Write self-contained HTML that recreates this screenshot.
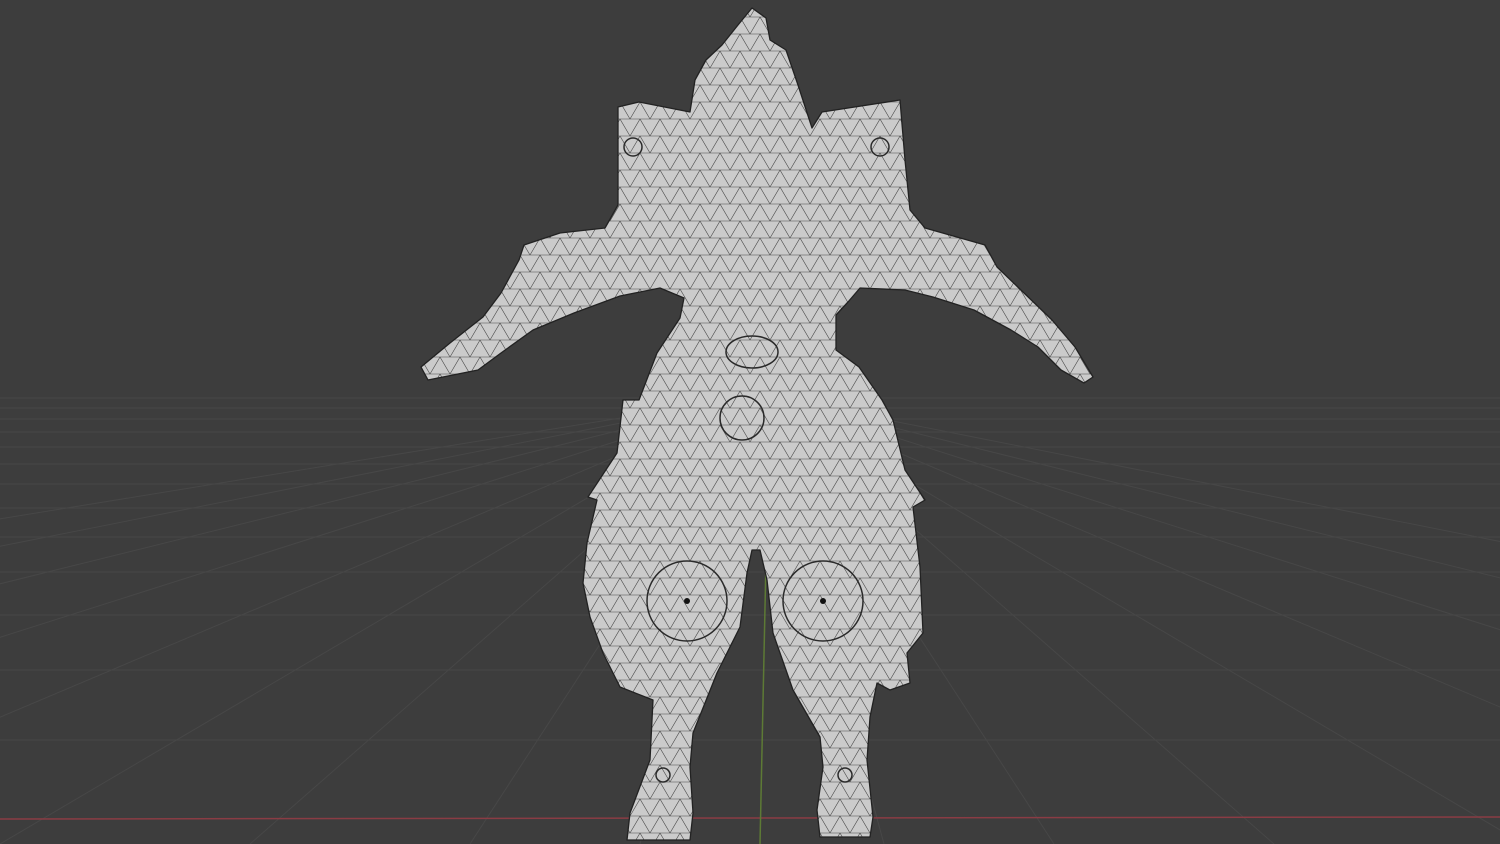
<!DOCTYPE html>
<html><head><meta charset="utf-8"><style>
html,body{margin:0;padding:0;background:#3d3d3d;width:1500px;height:844px;overflow:hidden}
svg{display:block}
</style></head><body>
<svg width="1500" height="844" viewBox="0 0 1500 844" xmlns="http://www.w3.org/2000/svg">
<defs>
<pattern id="tri" width="20" height="17" patternUnits="userSpaceOnUse">
<rect width="20" height="17" fill="#cbcbcb"/>
<path d="M0 0H20M0 0L10 17L20 0M0 17H20M-10 17L0 0M10 17L20 0" stroke="#4a4a4a" stroke-width="0.6" fill="none"/>
</pattern>
</defs>
<rect width="1500" height="844" fill="#3d3d3d"/>
<g stroke="#474747" stroke-width="1" fill="none">
<line x1="0" y1="398" x2="1500" y2="398"/>
<line x1="0" y1="408" x2="1500" y2="408"/>
<line x1="0" y1="419" x2="1500" y2="419"/>
<line x1="0" y1="432" x2="1500" y2="432"/>
<line x1="0" y1="447" x2="1500" y2="447"/>
<line x1="0" y1="464" x2="1500" y2="464"/>
<line x1="0" y1="484" x2="1500" y2="484"/>
<line x1="0" y1="508" x2="1500" y2="508"/>
<line x1="0" y1="537" x2="1500" y2="537"/>
<line x1="0" y1="572" x2="1500" y2="572"/>
<line x1="0" y1="615" x2="1500" y2="615"/>
<line x1="0" y1="670" x2="1500" y2="670"/>
<line x1="0" y1="740" x2="1500" y2="740"/>
<line x1="762" y1="395" x2="-2000" y2="844"/>
<line x1="762" y1="395" x2="-1500" y2="844"/>
<line x1="762" y1="395" x2="-1050" y2="844"/>
<line x1="762" y1="395" x2="-650" y2="844"/>
<line x1="762" y1="395" x2="-300" y2="844"/>
<line x1="762" y1="395" x2="0" y2="844"/>
<line x1="762" y1="395" x2="250" y2="844"/>
<line x1="762" y1="395" x2="470" y2="844"/>
<line x1="762" y1="395" x2="640" y2="844"/>
<line x1="762" y1="395" x2="884" y2="844"/>
<line x1="762" y1="395" x2="1054" y2="844"/>
<line x1="762" y1="395" x2="1274" y2="844"/>
<line x1="762" y1="395" x2="1524" y2="844"/>
<line x1="762" y1="395" x2="1824" y2="844"/>
<line x1="762" y1="395" x2="2174" y2="844"/>
<line x1="762" y1="395" x2="2574" y2="844"/>
<line x1="762" y1="395" x2="3024" y2="844"/>
</g>
<line x1="0" y1="819" x2="1500" y2="817" stroke="#8a3c44" stroke-width="1.5"/>
<line x1="766" y1="560" x2="760" y2="844" stroke="#5d7a35" stroke-width="1.5"/>
<polygon fill="url(#tri)" stroke="#222" stroke-width="1.3" stroke-linejoin="round" points="
752,8 766,18 770,40 786,50 798,85 812,128 822,112 900,100 905,160 910,210 925,228 985,245 997,267 1024,293 1052,320 1075,347 1093,377 1084,383 1061,370 1038,347 1011,330 974,310 933,297 905,290 860,288 848,302 836,315 836,350 859,367 882,400
893,420 905,470 925,500 913,507 920,567 923,633 907,653 910,683 890,690 877,683 870,717 867,760 873,817 870,837 820,837 817,810 823,767 820,737 793,690 773,633 767,580 760,550 752,550 747,573 740,627 717,673 693,733 690,767 693,813 690,840 627,840 630,813 650,760 653,700 620,687 603,653 590,617 583,583 587,543 597,500 588,497 617,453 623,400
639,400 657,353 680,318 684,298 660,288 620,296 574,313 533,330 501,353 478,370 428,380 421,367 450,343 483,317 501,293 519,260 524,245 560,233 605,228 618,205 618,107 639,102 690,112 695,80 706,60 722,45 738,25"/>
<g fill="none" stroke="#2a2a2a" stroke-width="1.5">
<circle cx="687" cy="601" r="40"/><circle cx="823" cy="601" r="40"/>
<circle cx="742" cy="418" r="22"/>
<ellipse cx="752" cy="352" rx="26" ry="16"/>
<circle cx="633" cy="147" r="9"/><circle cx="880" cy="147" r="9"/>
<circle cx="663" cy="775" r="7"/><circle cx="845" cy="775" r="7"/>
</g>
<circle cx="687" cy="601" r="3" fill="#111"/><circle cx="823" cy="601" r="3" fill="#111"/>
</svg>
</body></html>
